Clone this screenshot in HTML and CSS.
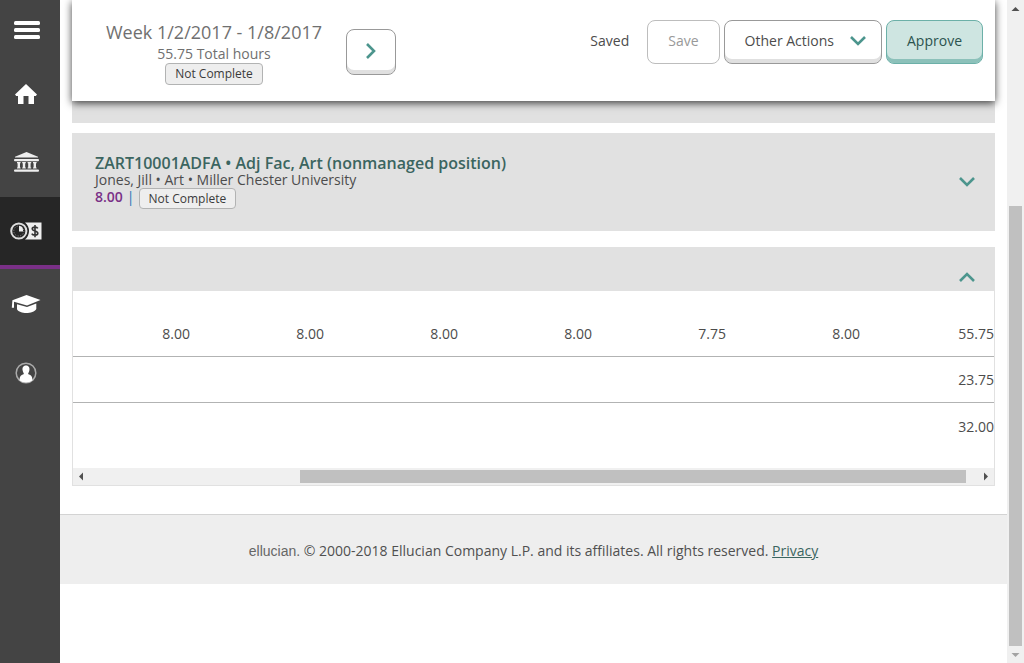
FILE: index.html
```html
<!DOCTYPE html>
<html lang="en">
<head>
<meta charset="utf-8">
<title>Time Approval</title>
<link rel="stylesheet" href="styles.css">
</head>
<body>
<div class="app">
  <nav class="sidebar" aria-label="Main">
    <button class="side-item menu" type="button" aria-label="Menu">
      <svg width="26" height="18" viewBox="0 0 26 18" fill="#fff"><rect width="26" height="4" rx="1.5"/><rect y="7" width="26" height="4" rx="1.5"/><rect y="14" width="26" height="4" rx="1.5"/></svg>
    </button>
    <a class="side-item home" href="#" aria-label="Home">
      <svg width="22" height="20" viewBox="0 0 22 20" fill="#fff"><path d="M11 0 22 10.5 20.8 12H19V20H13.5V12H8.5V20H3V12H1.2L0 10.5Z"/></svg>
    </a>
    <a class="side-item tall" href="#" aria-label="Financial">
      <svg width="25" height="20" viewBox="0 0 25 20" fill="#eee"><path d="M12.5 0 24 4.8V5.6H1V4.8Z"/><rect y="7" width="25" height="2.2" rx="1"/><path d="M3 10h3.6v1.2H6v4.3h.6v1H3v-1h.6v-4.3H3ZM8.2 10h3.6v1.2h-.6v4.3h.6v1H8.2v-1h.6v-4.3h-.6ZM13.6 10h3.6v1.2h-.6v4.3h.6v1h-3.6v-1h.6v-4.3h-.6ZM19 10h3.6v1.2H22v4.3h.6v1H19v-1h.6v-4.3H19Z"/><rect y="17.5" width="25" height="2.3" rx="1"/></svg>
    </a>
    <a class="side-item current" href="#" aria-label="Employment" aria-current="page">
      <svg width="32" height="18" viewBox="0 0 32 18"><path d="M15 .5H31.5V17.5H15A11 11 0 0 0 15 .5Z" fill="#eee"/><circle cx="8.8" cy="9" r="7.6" fill="none" stroke="#ddd" stroke-width="2"/><circle cx="8.8" cy="9" r="5" fill="none" stroke="#aaa" stroke-width=".8" stroke-dasharray="1 1.6"/><path d="M9 4V9.5H13V8A4 4 0 0 0 10 4Z" fill="#eee"/><path d="M27.8 6.3C27 4.8 22.2 4.5 22.2 7 22.2 9.5 27.8 8.3 27.8 11.2 27.8 13.9 22.5 13.5 21.8 11.6M25 3V15.3" fill="none" stroke="#333" stroke-width="1.6"/></svg>
    </a>
    <a class="side-item tall" href="#" aria-label="Academics">
      <svg width="30" height="19" viewBox="0 0 30 19" fill="#fff"><path d="M15.5 0 29.5 5 16 10.5 3 6.8V12.8H.8L1.4 5.2Z"/><path d="M6 9.2 16 12 25.3 8.4V14C22.5 19 9 19.5 6 14.3Z"/></svg>
    </a>
    <a class="side-item" href="#" aria-label="Account">
      <svg width="22" height="22" viewBox="0 0 22 22"><circle cx="11" cy="11" r="9.8" fill="none" stroke="#aaa" stroke-width="1.5"/><path d="M11 3.5C14 3.5 14.8 6 14.4 8.2 14.2 9.7 13.4 10.7 13.1 12 15.6 13.1 17.3 13.8 17.5 18.2 14 21.2 8 21.2 4.5 18.2 4.7 13.8 6.4 13.1 8.9 12 8.6 10.7 7.8 9.7 7.6 8.2 7.2 6 8 3.5 11 3.5Z" fill="#fff"/></svg>
    </a>
  </nav>

  <div class="page">
    <main class="content">
      <header class="toolbar">
        <div class="period">
          <h1 class="week">Week 1/2/2017 - 1/8/2017</h1>
          <p class="hours">55.75 Total hours</p>
          <span class="badge">Not Complete</span>
        </div>
        <button class="btn next" type="button" aria-label="Next week">
          <svg width="12" height="16" viewBox="0 0 12 16"><path d="M2 1 9 8 2 15" fill="none" stroke="#4c958d" stroke-width="2.6"/></svg>
        </button>
        <div class="actions">
          <span class="saved">Saved</span>
          <button class="btn save" type="button" disabled>Save</button>
          <button class="btn other" type="button">Other Actions
            <svg width="16" height="10" viewBox="0 0 16 10"><path d="M1 1 8 8 15 1" fill="none" stroke="#4c958d" stroke-width="2.6"/></svg>
          </button>
          <button class="btn approve" type="button">Approve</button>
        </div>
      </header>
      <div class="strip"></div>

      <section class="card">
        <div>
          <h2 class="position">ZART10001ADFA • Adj Fac, Art (nonmanaged position)</h2>
          <p class="person">Jones, Jill • Art • Miller Chester University</p>
          <div class="status"><b class="total">8.00</b><span class="bar">|</span><span class="badge">Not Complete</span></div>
        </div>
        <button class="toggle" type="button" aria-label="Expand">
          <svg width="16" height="10" viewBox="0 0 16 10"><path d="M1 1 8 8 15 1" fill="none" stroke="#4c958d" stroke-width="2.6"/></svg>
        </button>
      </section>

      <section class="summary">
        <div class="summary-head">
          <button class="toggle" type="button" aria-label="Collapse">
            <svg width="16" height="10" viewBox="0 0 16 10"><path d="M1 9 8 2 15 9" fill="none" stroke="#4c958d" stroke-width="2.6"/></svg>
          </button>
        </div>
        <div class="summary-body">
          <table class="totals">
            <tbody>
              <tr><td class="first">8.00</td><td>8.00</td><td>8.00</td><td>8.00</td><td>7.75</td><td>8.00</td><td>55.75</td></tr>
              <tr><td class="first"></td><td></td><td></td><td></td><td></td><td></td><td>23.75</td></tr>
              <tr><td class="first"></td><td></td><td></td><td></td><td></td><td></td><td>32.00</td></tr>
            </tbody>
          </table>
          <div class="hscroll" aria-hidden="true">
            <svg width="17" height="17" viewBox="0 0 17 17"><path d="M6 8.5 10 4.5V12.5Z" fill="#505050"/></svg>
            <div class="htrack"><div class="hthumb"></div></div>
            <svg width="17" height="17" viewBox="0 0 17 17"><path d="M11 8.5 7 4.5V12.5Z" fill="#505050"/></svg>
          </div>
        </div>
      </section>
    </main>
    <footer class="footer">
      <span class="brand">ellucian.</span> © 2000-2018 Ellucian Company L.P. and its affiliates. All rights reserved. <a href="#">Privacy</a>
    </footer>
  </div>

  <div class="vscroll" aria-hidden="true">
    <svg width="17" height="17" viewBox="0 0 17 17"><path d="M8.5 7 12.5 11H4.5Z" fill="#505050"/></svg>
    <div class="vtrack"><div class="vthumb"></div></div>
    <svg width="17" height="17" viewBox="0 0 17 17"><path d="M8.5 11 4.5 7H12.5Z" fill="#a3a3a3"/></svg>
  </div>
</div>
</body>
</html>
```
FILE: styles.css
```css
* { box-sizing: border-box; }
body {
  margin: 0;
  background: #fff;
  color: #4c4c4c;
  font: 14px/17px "Open Sans", "Noto Sans", sans-serif;
}
h1, h2, p { margin: 0; font-weight: 400; }
button { font: inherit; color: inherit; cursor: pointer; }
svg { display: block; flex: none; }

.app { display: flex; min-height: 100vh; }

.sidebar {
  display: flex;
  flex-direction: column;
  flex: none;
  width: 60px;
  background: #444;
}
.side-item {
  display: flex;
  align-items: center;
  justify-content: center;
  height: 68px;
  padding: 0 8px 0 0;
  border: 0;
  background: none;
}
.side-item.menu { height: 60px; padding: 0 6px 0 0; }
.side-item.home { height: 67px; }
.side-item.tall { height: 70px; }
.side-item.current {
  height: 72px;
  background: #262626;
  border-bottom: 4px solid #7a3087;
}

.page { flex: 1; min-width: 0; }
.content { padding: 0 12px 28px; }

.toolbar {
  position: relative;
  display: flex;
  align-items: flex-start;
  padding: 20px 12px 16px 34px;
  background: #fff;
  box-shadow: 0 2px 8px rgba(0, 0, 0, .75);
}
.period { text-align: center; color: #707070; }
.week { font-size: 18px; line-height: 25px; }
.hours { line-height: 18px; }
.badge {
  display: inline-block;
  padding: 0 9px;
  border: 1px solid #b2b3b3;
  border-radius: 4px;
  background: #eee;
  color: #3b3b3b;
  font-size: 12px;
  font-weight: 500;
  line-height: 20px;
}
.btn {
  display: flex;
  align-items: center;
  justify-content: center;
  height: 44px;
  padding: 0 20px 3px;
  border: 1px solid #999;
  border-radius: 8px;
  background: #fff;
  font-weight: 500;
  box-shadow: inset 0 -4px #e0e0e0;
}
.btn.next { width: 50px; height: 46px; margin: 9px 0 0 24px; padding: 0 0 2px; }
.actions { display: flex; align-items: center; margin-left: auto; gap: 4px; }
.saved { margin-right: 14px; padding-bottom: 3px; }
.btn.save { color: #999; border-color: #bdbdbd; box-shadow: none; }
.btn.other { gap: 16px; padding-right: 15px; }
.btn.approve {
  color: #2b534e;
  background: #cee5e1;
  border-color: #6cb0a8;
  box-shadow: inset 0 -4px #8cc1ba;
}

.strip { height: 22px; margin-bottom: 10px; background: #e1e1e1; }

.card {
  display: flex;
  align-items: center;
  justify-content: space-between;
  padding: 22px 20px 22px 23px;
  background: #e1e1e1;
}
.position { color: #3b6560; font-size: 16px; line-height: 16px; font-weight: 600; }
.status { display: flex; align-items: flex-start; gap: 4px; height: 21px; }
.total { color: #7a3087; font-weight: 600; }
.bar { color: #2874b8; }
.card .badge { line-height: 19px; }
.toggle { padding: 0; border: 0; background: none; }

.summary { margin-top: 16px; }
.summary-head {
  display: flex;
  align-items: flex-end;
  justify-content: flex-end;
  height: 44px;
  padding: 0 20px 9px;
  background: #e1e1e1;
}
.summary-body { padding-top: 20px; border: 1px solid #e1e1e1; border-top: 0; }
.totals { width: 100%; border-spacing: 0; table-layout: fixed; }
.totals td {
  width: 134px;
  height: 46px;
  padding: 0;
  text-align: right;
  border-bottom: 1px solid #b2b3b3;
}
.totals .first { width: auto; }
.totals tr:last-child td { border-bottom: 0; }

.hscroll { display: flex; margin-top: 19px; background: #f0f0f0; }
.htrack { flex: 1; padding: 2px 11px 2px 0; }
.hthumb { width: 76%; height: 13px; margin-left: auto; background: #c0c0c0; }

.footer {
  padding: 27px 20px 24px;
  border-top: 1px solid #d3d3d3;
  background: #eee;
  color: #505050;
  line-height: 18px;
  text-align: center;
}
.footer a { color: #3b6560; }
.brand { color: #666; font-family: "Liberation Sans", Arial, sans-serif; }

.vscroll { display: flex; flex-direction: column; flex: none; width: 17px; background: #f0f0f0; }
.vtrack { display: flex; flex: 1; flex-direction: column; justify-content: flex-end; padding: 0 2px; }
.vthumb { height: 70%; background: #c0c0c0; }
```
